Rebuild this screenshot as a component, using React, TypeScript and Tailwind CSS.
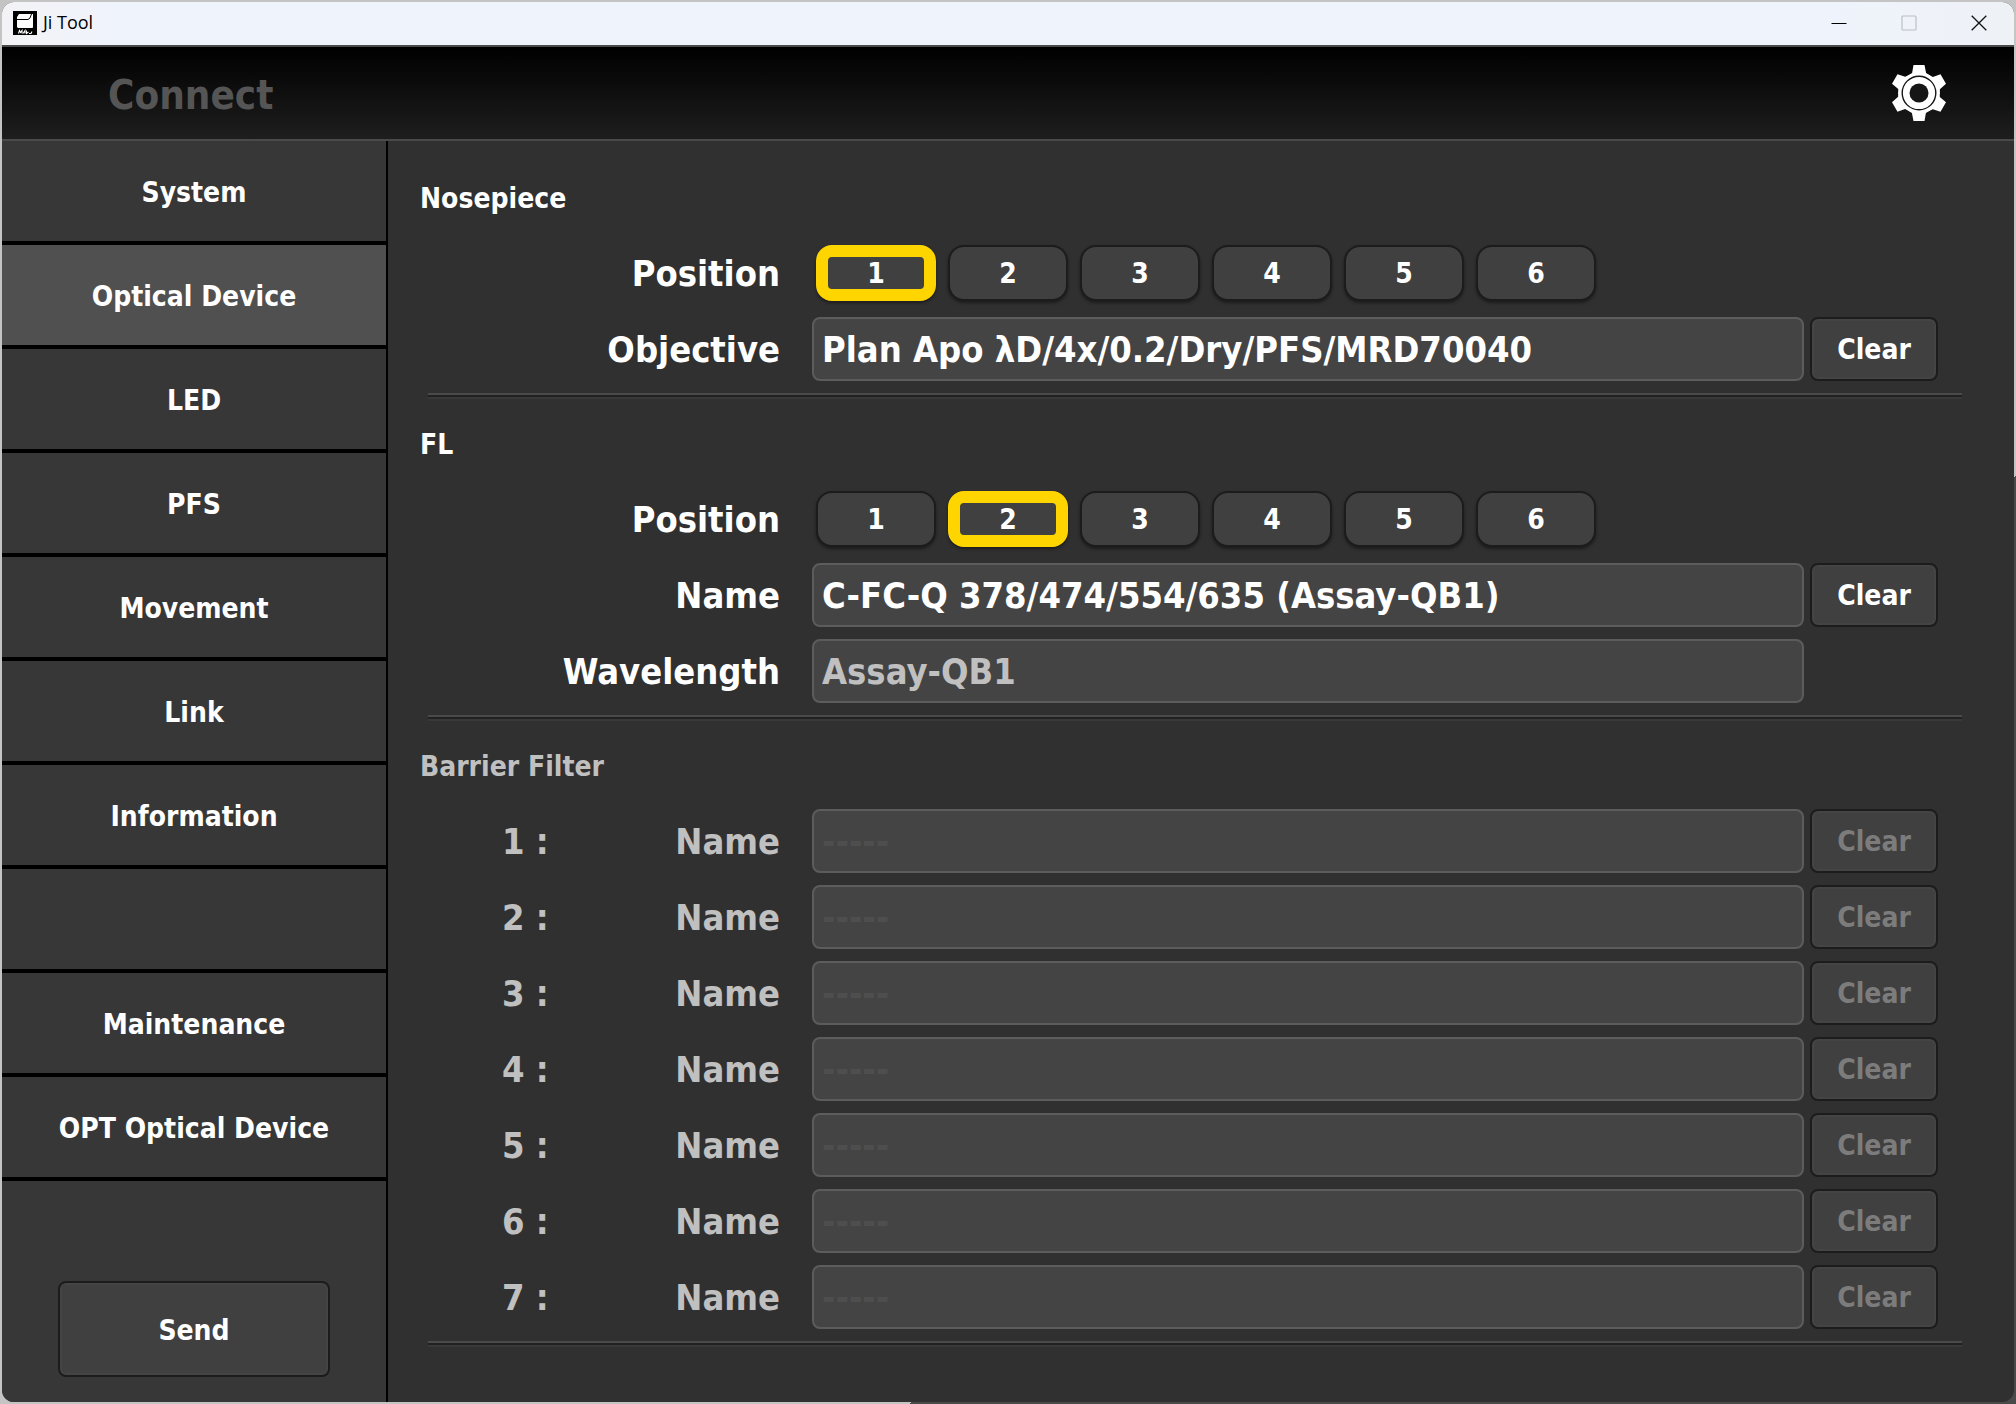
import React, { useState } from "react";

const navItems = [
  "System",
  "Optical Device",
  "LED",
  "PFS",
  "Movement",
  "Link",
  "Information",
  "",
  "Maintenance",
  "OPT Optical Device",
];

const barrierSlots = [1, 2, 3, 4, 5, 6, 7];

function AppIcon() {
  return (
    <svg viewBox="0 0 24 24" className="size-6" aria-hidden="true">
      <rect width="24" height="24" fill="#000" />
      <path d="M6 3h14v13.500l-1 .5H5l-1-1V6z" fill="#fff" />
      <path d="M4 8.500h11l2-1.500 1.500-4" fill="none" stroke="#000" strokeWidth="1" />
      <path d="M5.500 22.500l1-3 1 2 1.500-2v3M10 22.500l2-3v3M13.500 19.500v3l2-1.500M16 22.500h2l1-2" fill="none" stroke="#fff" strokeWidth="1.100" />
    </svg>
  );
}

function GearIcon() {
  return (
    <svg viewBox="-28 -28 56 56" className="size-14" aria-hidden="true">
      <g fill="#fff">
        {[0, 60, 120, 180, 240, 300].map((angle) => (
          <path key={angle} d="M-5.500-28h11l1.600 8 4 2.500v6h-22v-6l4-2.500z" transform={`rotate(${angle})`} />
        ))}
        <circle r="20.500" />
      </g>
      <circle r="16.800" fill="none" stroke="#141414" strokeWidth="1.400" />
      <circle r="9.500" fill="#161616" />
    </svg>
  );
}

function TitleBar() {
  return (
    <div className="flex h-[43px] shrink-0 items-center bg-[linear-gradient(90deg,#f3f3f6,#eff3fc_6%,#eff3fc_88%,#eef2f7)] pb-0.5 pl-[11px] font-['Open_Sans','Noto_Sans',sans-serif] text-[18px] font-normal text-black">
      <AppIcon />
      <span className="ml-1.5 flex-1">Ji Tool</span>
      <button aria-label="Minimize" className="flex h-full w-[70px] items-center justify-center">
        <svg viewBox="0 0 16 16" className="size-4"><path d="M.5 8.500h15" stroke="#000" /></svg>
      </button>
      <button aria-label="Maximize" disabled className="flex h-full w-[70px] items-center justify-center">
        <svg viewBox="0 0 16 16" className="size-4"><rect x="1" y="1" width="14" height="14" rx="1" fill="none" stroke="#bcbfc4" strokeWidth="1.200" /></svg>
      </button>
      <button aria-label="Close" className="flex h-full w-[70px] items-center justify-center">
        <svg viewBox="0 0 16 16" className="size-4"><path d="M.7.7l14.600 14.600M15.300.7L.7 15.300" stroke="#111" strokeWidth="1.300" /></svg>
      </button>
    </div>
  );
}

function Sidebar() {
  const [active, setActive] = useState("Optical Device");
  return (
    <nav className="flex w-[386px] shrink-0 flex-col border-r-2 border-black bg-[#373737]">
      {navItems.map((item, i) => (
        <button
          key={i}
          onClick={() => setActive(item)}
          className={`flex h-[104px] shrink-0 items-center justify-center border-b-4 border-black pt-1 ${item === active ? "bg-[#505050]" : "bg-[#373737]"}`}
        >
          {item}
        </button>
      ))}
      <button className="mx-14 mt-[100px] h-24 rounded-lg border-2 border-[#1c1c1c] bg-[#404040] pt-1 inset-ring-2 inset-ring-[#444444]">
        Send
      </button>
    </nav>
  );
}

function PositionRow({ group, initial }: { group: string; initial: number }) {
  const [selected, setSelected] = useState(initial);
  return (
    <div className="flex h-14 items-center">
      <span className="w-[392px] shrink-0 pt-0.5 pr-8 text-right text-[36px]">Position</span>
      <div className="ml-1 flex gap-3" role="group" aria-label={`${group} position`}>
        {[1, 2, 3, 4, 5, 6].map((n) => (
          <button
            key={n}
            aria-pressed={n === selected}
            onClick={() => setSelected(n)}
            className={`h-14 w-[120px] rounded-2xl bg-[#404040] pt-0.5 leading-7 shadow-[0_2px_3px_#1c1c1c] ${n === selected ? "border-12 border-[#ffd500]" : "border-2 border-[#1c1c1c]"}`}
          >
            {n}
          </button>
        ))}
      </div>
    </div>
  );
}

function FieldRow({
  id,
  label,
  index,
  value,
  placeholder,
  disabled = false,
  clearable = true,
}: {
  id: string;
  label: string;
  index?: number;
  value?: string;
  placeholder?: string;
  disabled?: boolean;
  clearable?: boolean;
}) {
  const [text, setText] = useState(value ?? "");
  const dim = disabled && index !== undefined;
  return (
    <div className="flex h-16 items-center pr-6">
      <label htmlFor={id} className={`flex w-[392px] shrink-0 pt-0.5 pr-8 text-[36px] ${dim ? "text-[#c0c0c0]" : ""}`}>
        {index !== undefined && <span className="ml-[82px]">{index} :</span>}
        <span className="ml-auto">{label}</span>
      </label>
      <input
        id={id}
        value={text}
        placeholder={placeholder}
        disabled={disabled}
        onChange={(e) => setText(e.target.value)}
        className="h-16 min-w-0 flex-1 rounded-lg border-2 border-[#5c5c5c] bg-[#444444] px-2 text-[36px] placeholder:text-[#4e4e4e] disabled:text-[#c0c0c0]"
      />
      {clearable ? (
        <button
          disabled={disabled}
          onClick={() => setText("")}
          className="ml-1.5 h-16 w-32 rounded-lg border-2 border-[#1c1c1c] bg-[#404040] pt-0.5 inset-ring-2 inset-ring-[#444444] disabled:text-[#7c7c7c]"
        >
          Clear
        </button>
      ) : (
        <span className="ml-1.5 w-32" />
      )}
    </div>
  );
}

function Divider() {
  return <div className="mt-3 ml-2 h-1.5 border-t-2 border-b-2 border-t-[#4a4a4a] border-b-[#393939] bg-[#212121]" />;
}

export default function App() {
  return (
    <div className="min-h-screen bg-[linear-gradient(140deg,#c4c4c4_70%,#4a4a4a_70%)] p-0.5 font-['DejaVu_Sans_Condensed','DejaVu_Sans',sans-serif] text-[28px] font-bold text-white">
      <div className="flex min-h-[calc(100vh-4px)] flex-col overflow-hidden rounded-xl bg-[#303030]">
        <TitleBar />
        <header className="flex h-24 shrink-0 items-center justify-between border-y-2 border-[#4a4a4a] bg-[linear-gradient(#000,#1e1e1e)] pr-[67px] pl-[106px]">
          <button disabled className="pt-1 text-[40px] text-[#555555]">Connect</button>
          <button aria-label="Settings"><GearIcon /></button>
        </header>
        <div className="flex flex-1">
          <Sidebar />
          <main className="min-w-0 flex-1 pt-3 pr-[52px] pl-8">
            <section className="pt-[25px]">
              <h2 className="mb-[25px] leading-[42px]">Nosepiece</h2>
              <div className="flex flex-col gap-4">
                <PositionRow group="Nosepiece" initial={1} />
                <FieldRow id="objective" label="Objective" value="Plan Apo λD/4x/0.2/Dry/PFS/MRD70040" />
              </div>
              <Divider />
            </section>
            <section className="pt-[25px]">
              <h2 className="mb-[25px] leading-[42px]">FL</h2>
              <div className="mb-4"><PositionRow group="FL" initial={2} /></div>
              <div className="flex flex-col gap-3">
                <FieldRow id="fl-name" label="Name" value="C-FC-Q 378/474/554/635 (Assay-QB1)" />
                <FieldRow id="wavelength" label="Wavelength" value="Assay-QB1" disabled clearable={false} />
              </div>
              <Divider />
            </section>
            <section className="pt-[25px]">
              <h2 className="mb-[21px] leading-[42px] text-[#c0c0c0]">Barrier Filter</h2>
              <div className="flex flex-col gap-3">
                {barrierSlots.map((n) => (
                  <FieldRow key={n} id={`barrier-${n}`} label="Name" index={n} placeholder="-----" disabled />
                ))}
              </div>
              <Divider />
            </section>
          </main>
        </div>
      </div>
    </div>
  );
}
